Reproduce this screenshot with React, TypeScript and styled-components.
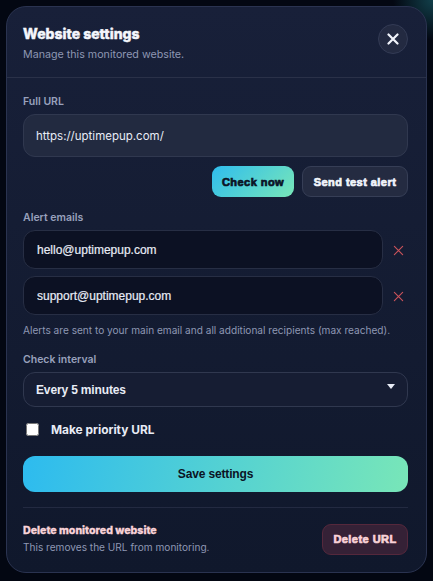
import React from "react";
import styled, { createGlobalStyle } from "styled-components";

const Global = createGlobalStyle`
  html, body { margin: 0; padding: 0; height: 100%; }
  body {
    background:
      radial-gradient(circle at 100% 0%, rgba(30,110,120,.55) 0, rgba(10,20,40,0) 40px),
      #030712;
    font-family: Inter, "Noto Sans", sans-serif;
    overflow: hidden;
  }
  * { box-sizing: border-box; }
`;

const Page = styled.div`
  width: 433px;
  height: 581px;
  padding: 6px 6px 8px 6px;
`;

const Modal = styled.section`
  width: 421px;
  height: 567px;
  border: 1px solid #2a3350;
  border-radius: 20px;
  background: linear-gradient(180deg, #182039 0%, #10182c 100%);
  display: flex;
  flex-direction: column;
`;

const Header = styled.header`
  height: 71px;
  padding: 17px 18px 0 16px;
  border-bottom: 1px solid #2a3148;
  display: flex;
  justify-content: space-between;
  align-items: flex-start;
`;

const Title = styled.h2`
  margin: 0;
  color: #f4f6fc;
  font-size: 14px;
  line-height: 20px;
  font-weight: 800;
  -webkit-text-stroke: .4px #f4f6fc;
`;

const Subtitle = styled.p`
  margin: 3px 0 0;
  color: #8e97b3;
  font-size: 10.7px;
  line-height: 16px;
`;

const CloseButton = styled.button`
  width: 30px;
  height: 30px;
  padding: 0;
  border: 1px solid #333b55;
  border-radius: 50%;
  background: #232a41;
  color: #f1f4fb;
  display: flex;
  align-items: center;
  justify-content: center;
`;

const Body = styled.div`
  padding: 17px 18px 0 16px;
  display: flex;
  flex-direction: column;
`;

const Label = styled.label`
  display: block;
  color: #98a1bc;
  font-size: 10.5px;
  line-height: 14px;
  font-weight: 600;
`;

const UrlInput = styled.input`
  width: 100%;
  height: 43px;
  margin-top: 5px;
  padding: 0 12px;
  border: 1px solid #30384f;
  border-radius: 12px;
  background: #222a40;
  color: #e8ecf6;
  font-family: Inter, sans-serif;
  font-size: 11.5px;
  outline: none;
`;

const Actions = styled.div`
  margin-top: 9px;
  display: flex;
  justify-content: flex-end;
  gap: 8px;
`;

const PrimarySmall = styled.button`
  width: 82px;
  height: 31px;
  padding: 0;
  border: 0;
  border-radius: 9px;
  background: linear-gradient(135deg, #2fbdee, #78e6b8);
  color: #0b1324;
  font-family: "Liberation Sans", Arial, sans-serif;
  font-size: 11px;
  font-weight: 900;
  -webkit-text-stroke: .7px #0b1324;
  letter-spacing: .45px;
`;

const SecondarySmall = styled.button`
  width: 106px;
  height: 31px;
  padding: 0;
  border: 1px solid #363e56;
  border-radius: 9px;
  background: #242b41;
  color: #f1f4fb;
  font-family: "Liberation Sans", Arial, sans-serif;
  font-size: 11px;
  font-weight: 900;
  -webkit-text-stroke: .7px #f1f4fb;
  letter-spacing: .45px;
`;

const EmailLabel = styled(Label)`
  margin-top: 14px;
`;

const EmailRow = styled.div<{ $first?: boolean }>`
  margin-top: ${(p) => (p.$first ? "5px" : "7px")};
  display: flex;
  align-items: center;
`;

const EmailInput = styled.input`
  width: 360px;
  height: 39px;
  padding: 0 13px;
  border: 1px solid #272e44;
  border-radius: 12px;
  background: #0c1123;
  color: #e8ecf6;
  font-family: "Liberation Sans", Arial, sans-serif;
  font-size: 12px;
  font-weight: 500;
  -webkit-text-stroke: .2px #e8ecf6;
  outline: none;
`;

const RemoveButton = styled.button`
  width: 25px;
  height: 39px;
  padding: 2px 4px 0 0;
  border: 0;
  background: transparent;
  color: #c9525a;
  display: flex;
  align-items: center;
  justify-content: flex-end;
`;

const Help = styled.p`
  margin: 7px 0 0;
  color: #8e97b3;
  font-size: 10.1px;
  line-height: 16px;
  white-space: nowrap;
`;

const IntervalLabel = styled(Label)`
  margin-top: 15px;
`;

const SelectWrap = styled.div`
  position: relative;
  margin-top: 5px;
`;

const Select = styled.select`
  display: block;
  width: 100%;
  height: 35px;
  padding: 0 12px;
  border: 1px solid #30384f;
  border-radius: 12px;
  background: #161d33;
  color: #e8ecf6;
  appearance: none;
  font-family: "Liberation Sans", Arial, sans-serif;
  font-size: 12px;
  letter-spacing: -.15px;
  font-weight: 700;
  outline: none;
`;

const Caret = styled.svg`
  position: absolute;
  top: 12px;
  right: 13px;
  width: 8px;
  height: 5px;
  pointer-events: none;
`;

const PriorityRow = styled.label`
  margin-top: 15px;
  padding-left: 3px;
  height: 14px;
  display: flex;
  align-items: center;
  color: #e8ecf6;
  font-size: 11.9px;
  font-weight: 700;
`;

const Check = styled.input`
  width: 13px;
  height: 13px;
  margin: 0 12px 0 0;
`;

const SaveButton = styled.button`
  width: 100%;
  height: 36px;
  margin-top: 20px;
  padding: 0 0 1px;
  border: 0;
  border-radius: 12px;
  background: linear-gradient(100deg, #2dbbef, #78e6b8);
  color: #0b1324;
  font-family: "Liberation Sans", Arial, sans-serif;
  font-size: 12px;
  letter-spacing: -.15px;
  font-weight: 700;
`;

const DangerZone = styled.div`
  margin-top: 15px;
  padding-top: 15px;
  border-top: 1px solid #232a41;
  display: flex;
  justify-content: space-between;
  align-items: center;
`;

const DangerTitle = styled.div`
  color: #f9d3d8;
  font-size: 10.6px;
  line-height: 16px;
  font-weight: 800;
  -webkit-text-stroke: .3px #f9d3d8;
`;

const DangerText = styled.div`
  color: #8e97b3;
  font-size: 10.1px;
  line-height: 16px;
`;

const DeleteButton = styled.button`
  width: 86px;
  height: 31px;
  padding: 0;
  border: 1px solid #55283c;
  border-radius: 9px;
  background: #352136;
  color: #f9d3d8;
  font-family: "Liberation Sans", Arial, sans-serif;
  font-size: 11px;
  font-weight: 900;
  -webkit-text-stroke: .7px #f9d3d8;
  letter-spacing: .45px;
`;

const Cross = ({ size, width }: { size: number; width: number }) => (
  <svg width={size} height={size} viewBox="0 0 12 12" fill="none" stroke="currentColor" strokeWidth={width} strokeLinecap="round">
    <path d="M1.5 1.5 10.5 10.5M10.5 1.5 1.5 10.5" />
  </svg>
);

export default function App() {
  return (
    <Page>
      <Global />
      <Modal>
        <Header>
          <div>
            <Title>Website settings</Title>
            <Subtitle>Manage this monitored website.</Subtitle>
          </div>
          <CloseButton aria-label="Close"><Cross size={12} width={2.2} /></CloseButton>
        </Header>
        <Body>
          <Label>Full URL</Label>
          <UrlInput defaultValue="https://uptimepup.com/" />
          <Actions>
            <PrimarySmall>Check now</PrimarySmall>
            <SecondarySmall>Send test alert</SecondarySmall>
          </Actions>
          <EmailLabel>Alert emails</EmailLabel>
          <EmailRow $first>
            <EmailInput defaultValue="hello@uptimepup.com" />
            <RemoveButton aria-label="Remove"><Cross size={11} width={1.25} /></RemoveButton>
          </EmailRow>
          <EmailRow>
            <EmailInput defaultValue="support@uptimepup.com" />
            <RemoveButton aria-label="Remove"><Cross size={11} width={1.25} /></RemoveButton>
          </EmailRow>
          <Help>Alerts are sent to your main email and all additional recipients (max reached).</Help>
          <IntervalLabel>Check interval</IntervalLabel>
          <SelectWrap>
            <Select defaultValue="5">
              <option value="5">Every 5 minutes</option>
              <option value="15">Every 15 minutes</option>
            </Select>
            <Caret viewBox="0 0 8 5"><path d="M0 0h8L4 5z" fill="#e8ecf6" /></Caret>
          </SelectWrap>
          <PriorityRow><Check type="checkbox" />Make priority URL</PriorityRow>
          <SaveButton>Save settings</SaveButton>
          <DangerZone>
            <div>
              <DangerTitle>Delete monitored website</DangerTitle>
              <DangerText>This removes the URL from monitoring.</DangerText>
            </div>
            <DeleteButton>Delete URL</DeleteButton>
          </DangerZone>
        </Body>
      </Modal>
    </Page>
  );
}
